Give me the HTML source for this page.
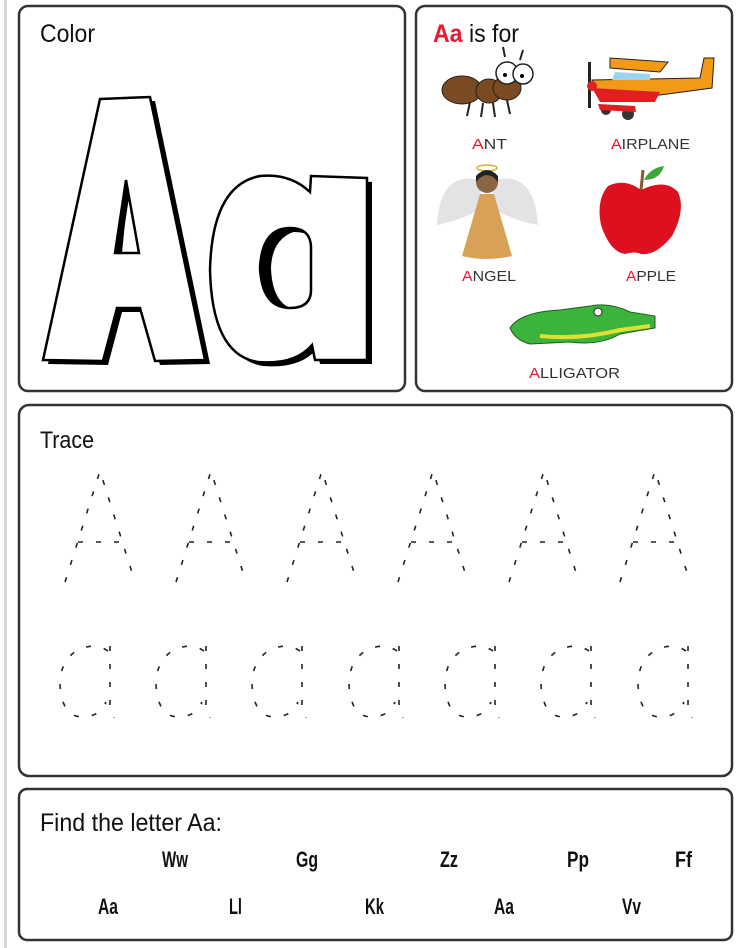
<!DOCTYPE html>
<html><head><style>
html,body{margin:0;padding:0;background:#fff;}
svg{display:block;}
.h{font-family:"Liberation Sans Narrow","Liberation Sans",sans-serif;fill:#111;}
.l{font-family:"Liberation Sans",sans-serif;font-size:15px;fill:#333;}
.r{fill:#e8182f;}
.tr{fill:none;stroke:#222;stroke-width:1.6;stroke-dasharray:5 13;}
</style></head><body>
<svg width="742" height="948" viewBox="0 0 742 948" xmlns="http://www.w3.org/2000/svg">
<rect x="4" y="0" width="3" height="948" fill="#d8d8d8"/>
<g fill="none" stroke="#333" stroke-width="2.5">
<rect x="19" y="6" width="386" height="385" rx="9"/>
<rect x="416" y="6" width="316" height="385" rx="9"/>
<rect x="19" y="405" width="713" height="371" rx="10"/>
<rect x="19" y="789" width="713" height="151" rx="8"/>
</g>
<text class="h" x="40" y="42" font-size="25" textLength="55" lengthAdjust="spacingAndGlyphs">Color</text>
<defs>
<path id="bigA" d="M100,99 L150,97 L205,360 L155,361 L140,308 L117,308 L103,361 L43,360 Z M126,180 L115,253 L139,253 Z"/>
<path id="bigAa" d="M310,192 Q290,173 260,176 Q212,185 210,270 Q212,355 258,362 Q295,365 312,345 L315,360 L367,360 L367,178 L311,176 Z M290,228 Q312,228 311,250 L311,290 Q311,308 290,308 Q262,308 260,268 Q262,228 290,228 Z"/>
</defs>
<use href="#bigA" x="5" y="4" fill="#000" fill-rule="evenodd"/>
<use href="#bigAa" x="5" y="4" fill="#000" fill-rule="evenodd"/>
<use href="#bigA" fill="#fff" stroke="#000" stroke-width="2.5" fill-rule="evenodd"/>
<use href="#bigAa" fill="#fff" stroke="#000" stroke-width="2.5" fill-rule="evenodd"/>
<path fill="#000" d="M126,180 L115,253 L122,253 L128,192 Z"/>
<path fill="#000" d="M290,228 Q262,228 260,268 Q262,308 290,308 Q272,300 271,268 Q272,236 300,230 Z"/>
<!-- right panel -->
<text class="h" x="433" y="42" font-size="25" textLength="86" lengthAdjust="spacingAndGlyphs"><tspan class="r" font-weight="bold">Aa</tspan> is for</text>
<g>
<ellipse cx="462" cy="90" rx="20" ry="14" fill="#7a4a22" stroke="#222"/>
<ellipse cx="489" cy="91" rx="13" ry="12" fill="#7a4a22" stroke="#222"/>
<ellipse cx="507" cy="88" rx="14" ry="12" fill="#7a4a22" stroke="#222"/>
<circle cx="507" cy="73" r="11" fill="#fff" stroke="#222" stroke-width="1.5"/>
<circle cx="523" cy="74" r="10" fill="#fff" stroke="#222" stroke-width="1.5"/>
<circle cx="505" cy="75" r="2" fill="#000"/><circle cx="522" cy="76" r="2" fill="#000"/>
<path d="M470,102 l-3,14 M483,103 l-2,14 M493,103 l2,14 M507,100 l3,14 M505,57 l-2,-10 M520,60 l3,-10" stroke="#222" stroke-width="2" fill="none"/>
</g>
<text class="l" x="472" y="149" textLength="35" lengthAdjust="spacingAndGlyphs"><tspan class="r">A</tspan>NT</text>
<g>
<path d="M592,80 L700,78 L704,58 L714,58 L712,88 L660,95 L600,100 Z" fill="#f29a17" stroke="#222" stroke-width="1"/>
<path d="M592,88 L660,92 L655,102 L600,102 Z" fill="#e02020"/>
<path d="M610,68 L660,72 L668,62 L610,58 Z" fill="#f29a17" stroke="#222" stroke-width="1"/>
<path d="M615,72 L650,74 L650,80 L612,80 Z" fill="#9cd4ee"/>
<rect x="588" y="62" width="3" height="46" fill="#222"/>
<circle cx="592" cy="86" r="5" fill="#d22"/>
<circle cx="606" cy="110" r="5" fill="#333"/><circle cx="628" cy="114" r="6" fill="#333"/>
<path d="M598,104 L635,106 L636,112 L600,110 Z" fill="#e02020"/>
</g>
<text class="l" x="611" y="149" textLength="79" lengthAdjust="spacingAndGlyphs"><tspan class="r">A</tspan>IRPLANE</text>
<g>
<path d="M480,180 Q440,170 437,225 Q462,220 482,208 Z" fill="#e3e3e6"/>
<path d="M494,180 Q534,170 538,225 Q512,220 492,208 Z" fill="#e3e3e6"/>
<ellipse cx="487" cy="168" rx="10" ry="3" fill="none" stroke="#d8b030" stroke-width="1.5"/>
<circle cx="487" cy="182" r="11" fill="#8a6545"/>
<path d="M476,182 Q487,168 498,182 L498,176 Q487,164 476,176 Z" fill="#222"/>
<path d="M480,194 L494,194 L512,256 Q487,262 462,256 Z" fill="#d7a257"/>
</g>
<text class="l" x="462" y="281" textLength="54" lengthAdjust="spacingAndGlyphs"><tspan class="r">A</tspan>NGEL</text>
<g>
<path d="M641,190 Q625,178 608,186 Q596,200 601,225 Q610,252 625,254 Q635,251 641,254 Q656,256 672,236 Q686,210 678,192 Q665,178 641,190 Z" fill="#dd1020"/>
<path d="M641,190 L643,170" stroke="#8a5a2a" stroke-width="3"/>
<path d="M644,180 Q650,168 664,166 Q660,180 644,180 Z" fill="#3da63a"/>
</g>
<text class="l" x="626" y="281" textLength="50" lengthAdjust="spacingAndGlyphs"><tspan class="r">A</tspan>PPLE</text>
<g>
<path d="M510,328 Q520,312 560,310 L590,306 Q610,302 630,312 L655,316 L655,328 L620,334 Q600,346 570,342 L530,344 Q515,340 510,328 Z" fill="#3cb43c" stroke="#1f5e1f"/>
<path d="M540,336 Q580,340 620,330 L650,326" stroke="#e0e030" stroke-width="4" fill="none"/>
<circle cx="598" cy="312" r="4" fill="#fff" stroke="#222"/>
</g>
<text class="l" x="529" y="378" textLength="91" lengthAdjust="spacingAndGlyphs"><tspan class="r">A</tspan>LLIGATOR</text>
<!-- trace -->
<text class="h" x="40" y="448" font-size="24" textLength="54" lengthAdjust="spacingAndGlyphs">Trace</text>
<g class="tr">
<path d="M65,582 L100,471 L135,582 M78,542 L122,542"/>
<path d="M176,582 L211,471 L246,582 M189,542 L233,542"/>
<path d="M287,582 L322,471 L357,582 M300,542 L344,542"/>
<path d="M398,582 L433,471 L468,582 M411,542 L455,542"/>
<path d="M509,582 L544,471 L579,582 M522,542 L566,542"/>
<path d="M620,582 L655,471 L690,582 M633,542 L677,542"/>
</g>
<g class="tr">
<path id="a1" d="M108,651 Q95,642 78,650 Q60,660 60,685 Q62,718 84,717 Q100,716 106,702 M110,646 L110,705 L114,718"/>
<use href="#a1" x="96"/><use href="#a1" x="192"/><use href="#a1" x="289"/><use href="#a1" x="385"/><use href="#a1" x="481"/><use href="#a1" x="578"/>
</g>
<!-- find -->
<text class="h" x="40" y="831" font-size="25" textLength="182" lengthAdjust="spacingAndGlyphs">Find the letter Aa:</text>
<g class="h" font-size="22" font-weight="bold">
<text x="162" y="867" textLength="26" lengthAdjust="spacingAndGlyphs">Ww</text>
<text x="296" y="867" textLength="22" lengthAdjust="spacingAndGlyphs">Gg</text>
<text x="440" y="867" textLength="18" lengthAdjust="spacingAndGlyphs">Zz</text>
<text x="567" y="867" textLength="22" lengthAdjust="spacingAndGlyphs">Pp</text>
<text x="675" y="867" textLength="17" lengthAdjust="spacingAndGlyphs">Ff</text>
<text x="98" y="914" textLength="20" lengthAdjust="spacingAndGlyphs">Aa</text>
<text x="229" y="914" textLength="13" lengthAdjust="spacingAndGlyphs">Ll</text>
<text x="365" y="914" textLength="19" lengthAdjust="spacingAndGlyphs">Kk</text>
<text x="494" y="914" textLength="20" lengthAdjust="spacingAndGlyphs">Aa</text>
<text x="622" y="914" textLength="19" lengthAdjust="spacingAndGlyphs">Vv</text>
</g>
</svg>
</body></html>
